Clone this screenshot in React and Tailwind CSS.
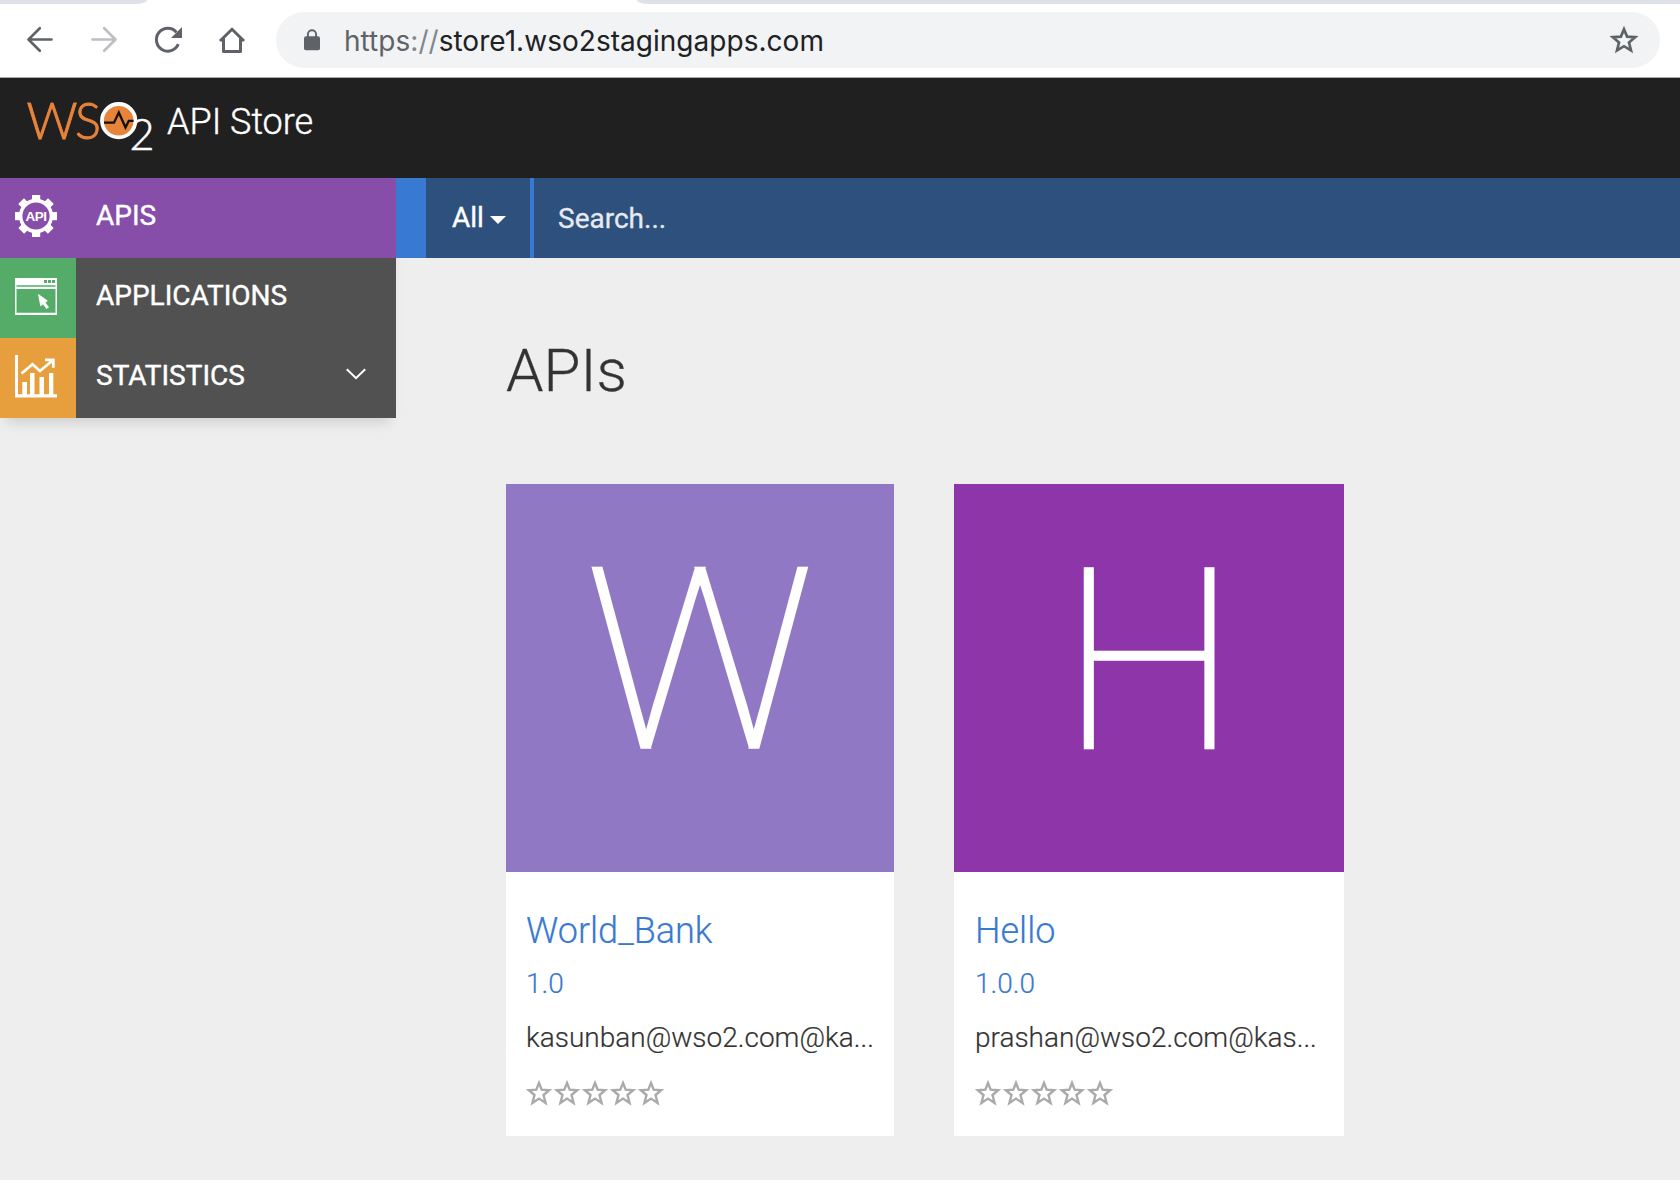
import React from "react";

function BrowserBar() {
  return (
    <div className="flex h-[78px] flex-col border-b border-[#a9a9a9] bg-white">
      <div className="flex h-1 shrink-0 bg-white">
        <div className="w-[147px] rounded-br-[12px_4px] bg-[#dee1e6]" />
        <div className="w-[490px]" />
        <div className="flex-1 rounded-bl-[12px_4px] bg-[#dee1e6]" />
      </div>
      <div className="flex h-[72px] items-center pr-5">
        <div className="flex w-[276px] shrink-0">
          <svg width="276" height="40" viewBox="0 20 276 40" fill="none" className="shrink-0">
            <g stroke="#5f6368" strokeWidth="2.7" strokeLinecap="round" strokeLinejoin="round">
              <path d="M51.5 39.5H29M39.8 28.3 28.5 39.5 39.8 50.7" />
              <path stroke="#bdbec1" d="M92.5 39.5H115M104.2 28.3 115.5 39.5 104.2 50.7" />
            </g>
            <path stroke="#5f6368" strokeWidth="3" d="M178.3 44.2A11.4 11.4 0 1 1 176.4 32.2" />
            <path fill="#5f6368" d="M182 27V38H171Z" />
            <path stroke="#5f6368" strokeWidth="3" strokeLinejoin="round" d="M223.5 38.5V51.5H240.5V38.5M220 41 232 29.2 244 41" />
          </svg>
        </div>
        <div className="flex h-14 min-w-0 flex-1 items-center rounded-full bg-[#f1f3f4] pl-7 pr-[21px]">
          <svg width="17" height="22" viewBox="0 0 17 22" className="shrink-0">
            <rect x="0" y="7.3" width="16" height="14" rx="2" fill="#5f6368" />
            <path d="M3.9 8V5.3A4.1 4.1 0 0 1 12.1 5.3V8" fill="none" stroke="#5f6368" strokeWidth="1.9" />
          </svg>
          <div className="ml-[23px] flex-1 whitespace-nowrap pt-px font-['Inter',sans-serif] text-[28px] leading-[56px] tracking-[0.03px] text-[#202124]">
            <span className="text-[#5f6368]">https</span>
            <span className="text-[#80868b]">://</span>store1.wso2stagingapps.com
          </div>
          <svg width="30" height="30" viewBox="0 0 30 30" fill="none" className="shrink-0">
            <path d="M15 4.2 18.1 11.6 26.2 12.2 20 17.5 22 25.4 15 21.2 8 25.4 10 17.5 3.8 12.2 11.9 11.6Z" stroke="#5f6368" strokeWidth="2.7" />
          </svg>
        </div>
      </div>
    </div>
  );
}

function Logo() {
  return (
    <svg width="132" height="100" viewBox="26 78 132 100" className="shrink-0">
      <g fontFamily="Lato" fontWeight="300" fontSize="51" fill="#e8833a" stroke="#e8833a" strokeWidth="0.9">
        <text x="26.5" y="138.5" textLength="51" lengthAdjust="spacingAndGlyphs">W</text>
        <text x="75" y="138.5" textLength="26" lengthAdjust="spacingAndGlyphs">S</text>
      </g>
      <text x="129.5" y="150" fontFamily="Lato" fontWeight="300" fontSize="43" fill="#fff" stroke="#fff" strokeWidth="0.6" textLength="23">2</text>
      <circle cx="118.7" cy="120.7" r="16.7" fill="#e8833a" stroke="#fff" strokeWidth="3.8" />
      <path d="M104 122.7H114L118.8 112.5 125.5 127.5 128.8 120.8H133.5" fill="none" stroke="#111" strokeWidth="2.3" />
    </svg>
  );
}

function ApiIcon() {
  return (
    <svg width="42" height="42" viewBox="0 0 42 42">
      <g fill="#fff">
        <rect x="17" y="0" width="8.2" height="42" />
        <rect x="17" y="0" width="8.2" height="42" transform="rotate(45 21 21)" />
        <rect x="17" y="0" width="8.2" height="42" transform="rotate(90 21 21)" />
        <rect x="17" y="0" width="8.2" height="42" transform="rotate(135 21 21)" />
        <circle cx="21" cy="21" r="17.2" />
      </g>
      <circle cx="21" cy="21" r="13.6" fill="#864da9" />
      <text x="10.5" y="26" fontFamily="Liberation Sans" fontWeight="700" fontSize="13.5" fill="#fff" textLength="21.5">API</text>
    </svg>
  );
}

function WindowIcon() {
  return (
    <svg width="42" height="38" viewBox="0 0 42 38">
      <path fill="#fff" fillRule="evenodd" d="M0 0H42V37H0ZM1.5 7.3V8.7H40.5V7.3ZM1.5 11V34.7H40.5V11ZM29 2V5H32V2ZM33 2V5H36V2ZM37 2V5H40V2Z" />
      <path fill="#fff" d="M23 15.7 32.8 22.8 30.5 24.8 34 29.2 31.4 31 28.2 26.4 25.3 28.3Z" />
    </svg>
  );
}

function ChartIcon() {
  return (
    <svg width="42" height="43" viewBox="0 0 42 43">
      <path fill="#fff" d="M0 0H3V39.3H42V42.6H0ZM7.3 27H12V40H7.3ZM15 18H19.5V40H15ZM24.5 22H29V40H24.5ZM34 18H38.3V40H34Z" />
      <path fill="none" stroke="#fff" strokeWidth="2.8" d="M6.5 18.5 17.5 9.3 25 16 37.5 5.5M30 4.8H38.3V12.8" />
    </svg>
  );
}

const menu = [
  { label: "APIS", icon: ApiIcon, box: "bg-[#864da9]", row: "bg-[#864da9]", pad: "pt-[17px]" },
  { label: "APPLICATIONS", icon: WindowIcon, box: "bg-[#54ac68]", row: "bg-[#515151]", pad: "pt-5" },
  { label: "STATISTICS", icon: ChartIcon, box: "bg-[#e69f3c]", row: "bg-[#515151]", pad: "pt-[17px]", arrow: true },
];

function Sidebar() {
  return (
    <nav className="h-60 w-[396px] shrink-0 shadow-[0_10px_12px_-6px_rgba(0,0,0,0.14)]">
      {menu.map(({ label, icon: Icon, box, row, pad, arrow }) => (
        <div key={label} className={`flex h-20 ${row}`}>
          <div className={`w-[76px] pl-[15px] ${box} ${pad}`}>
            <Icon />
          </div>
          <div className="flex-1 pl-5 text-[28px] leading-[76px] text-white [-webkit-text-stroke:0.4px_white]">{label}</div>
          {arrow && (
            <svg width="20" height="12" viewBox="0 0 20 12" fill="none" className="mr-[30px] mt-[30px]">
              <path d="M0.8 1.2 10 10.2 19.2 1.2" stroke="#fff" strokeWidth="2" />
            </svg>
          )}
        </div>
      ))}
    </nav>
  );
}

function Stars() {
  return (
    <div className="-ml-px flex h-[58px] items-center">
      {[0, 1, 2, 3, 4].map((i) => (
        <svg key={i} width="28" height="28" viewBox="0 0 28 28" fill="none">
          <path d="M14 4 16.7 10.7 24.2 11.2 18.5 16 20.6 24 14 19.6 7.4 24 9.5 16 3.8 11.2 11.3 10.7Z" stroke="#aaa" strokeWidth="2.4" />
        </svg>
      ))}
    </div>
  );
}

function ApiCard({ letter, name, version, owner, color, width, pad }) {
  return (
    <article className={`${width} bg-white`}>
      <div className={`flex h-[388px] justify-center text-[251px] font-thin leading-[355px] text-white ${color}`}>
        <span className="[-webkit-text-stroke:3.4px_white] [stroke-linejoin:round]">{letter}</span>
      </div>
      <div className={`h-[264px] whitespace-nowrap pt-9 font-light ${pad}`}>
        <h2 className="text-4xl leading-[47px] text-[#3879d1] [-webkit-text-stroke:0.2px_#3879d1]">{name}</h2>
        <div className="text-[28px] leading-[57px] text-[#3879d1] [-webkit-text-stroke:0.2px_#3879d1]">{version}</div>
        <div className="text-[28px] leading-[52px] text-[#333] [-webkit-text-stroke:0.2px_#333]">{owner}</div>
        <Stars />
      </div>
    </article>
  );
}

export default function App() {
  return (
    <div className="h-[1180px] w-[1680px] overflow-hidden bg-[#eee] font-['Roboto',sans-serif]">
      <BrowserBar />
      <header className="flex h-[100px] bg-[#202020] pl-[26px]">
        <Logo />
        <div className="ml-[9px] text-4xl font-light leading-[88px] text-white [-webkit-text-stroke:0.4px_white]">API Store</div>
      </header>
      <div className="flex">
        <Sidebar />
        <main className="min-w-0 flex-1">
          <div className="flex h-20 bg-[#3879d1] pl-[30px] text-[28px] leading-[82px]">
            <div className="flex w-[104px] items-center bg-[#2d507d] pl-[26px] text-white [-webkit-text-stroke:0.4px_white]">
              All
              <svg width="16" height="8" viewBox="0 0 16 8" className="ml-1.5 mt-1">
                <path d="M0 0H16L8 8Z" fill="#fff" />
              </svg>
            </div>
            <div className="ml-1 flex-1 bg-[#2d507d] pl-6 text-[#e6eaf0] [-webkit-text-stroke:0.3px_#e6eaf0]">Search...</div>
          </div>
          <div className="pl-[110px]">
            <h1 className="pt-[73px] text-[60px] font-light leading-[80px] text-[#333] [-webkit-text-stroke:0.3px_#333]">APIs</h1>
            <div className="mt-[73px] flex gap-[60px]">
              <ApiCard letter="W" name="World_Bank" version="1.0" owner="kasunban@wso2.com@ka..." color="bg-[#9078c5]" width="w-[388px]" pad="pl-5" />
              <ApiCard letter="H" name="Hello" version="1.0.0" owner="prashan@wso2.com@kas..." color="bg-[#8e35a9]" width="w-[390px]" pad="pl-[21px]" />
            </div>
          </div>
        </main>
      </div>
    </div>
  );
}
